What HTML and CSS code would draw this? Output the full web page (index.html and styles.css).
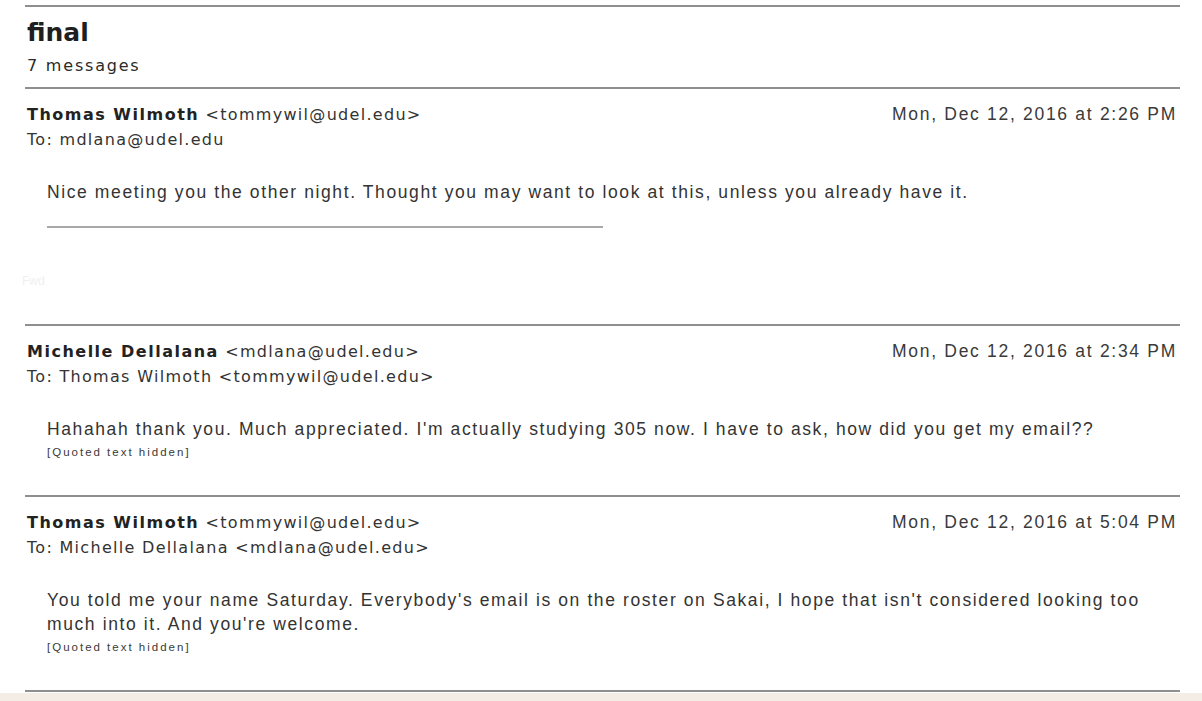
FILE: index.html
```html
<!DOCTYPE html>
<html lang="en">
<head>
<meta charset="utf-8">
<title>final - 7 messages</title>
<link rel="stylesheet" href="styles.css">
</head>
<body>
<div class="page">
  <div class="thread">
    <header class="thread-head">
      <h1 class="subject">final</h1>
      <div class="count">7 messages</div>
    </header>

    <section class="msg">
      <div class="msg-head">
        <div class="who">
          <div class="from"><b class="name">Thomas Wilmoth</b> &lt;tommywil@udel.edu&gt;</div>
          <div class="to">To: mdlana@udel.edu</div>
        </div>
        <div class="date">Mon, Dec 12, 2016 at 2:26 PM</div>
      </div>
      <div class="msg-body">
        <p class="text">Nice meeting you the other night. Thought you may want to look at this, unless you already have it.</p>
        <div class="sig-rule"></div>
        <div class="faint">Fwd</div>
      </div>
    </section>

    <section class="msg">
      <div class="msg-head">
        <div class="who">
          <div class="from"><b class="name">Michelle Dellalana</b> &lt;mdlana@udel.edu&gt;</div>
          <div class="to">To: Thomas Wilmoth &lt;tommywil@udel.edu&gt;</div>
        </div>
        <div class="date">Mon, Dec 12, 2016 at 2:34 PM</div>
      </div>
      <div class="msg-body">
        <p class="text">Hahahah thank you. Much appreciated. I'm actually studying 305 now. I have to ask, how did you get my email??</p>
        <div class="quoted">[Quoted text hidden]</div>
      </div>
    </section>

    <section class="msg">
      <div class="msg-head">
        <div class="who">
          <div class="from"><b class="name">Thomas Wilmoth</b> &lt;tommywil@udel.edu&gt;</div>
          <div class="to">To: Michelle Dellalana &lt;mdlana@udel.edu&gt;</div>
        </div>
        <div class="date">Mon, Dec 12, 2016 at 5:04 PM</div>
      </div>
      <div class="msg-body">
        <p class="text">You told me your name Saturday. Everybody's email is on the roster on Sakai, I hope that isn't considered looking too much into it. And you're welcome.</p>
        <div class="quoted">[Quoted text hidden]</div>
      </div>
    </section>
  </div>
  <div class="footer-band"></div>
</div>
</body>
</html>
```

FILE: styles.css
```css
* { box-sizing: border-box; }

html, body {
  margin: 0;
  padding: 0;
  background: #ffffff;
}

body {
  font-family: "Liberation Sans", Arial, sans-serif;
  color: #333333;
}

.page {
  display: flex;
  flex-direction: column;
  min-height: 701px;
}

.thread {
  margin-left: 25px;
  width: 1155px;
}

.thread-head {
  margin-top: 5px;
  border-top: 2px solid #8f8f8f;
  border-bottom: 2px solid #8f8f8f;
  padding: 12px 0 11px 2px;
}

.subject {
  margin: 0;
  font-family: "DejaVu Sans", Verdana, sans-serif;
  font-size: 25px;
  line-height: 28px;
  font-weight: bold;
  color: #1f1f1f;
}

.count {
  margin-top: 9px;
  font-family: "DejaVu Sans", Verdana, sans-serif;
  font-size: 16px;
  line-height: 20px;
  letter-spacing: 1.8px;
  color: #2a2a2a;
}

.msg {
  border-bottom: 2px solid #8f8f8f;
  padding: 13px 3px 35px 2px;
}

.msg-head {
  display: flex;
  justify-content: space-between;
  align-items: flex-start;
}

.from, .to {
  font-family: "DejaVu Sans", Verdana, sans-serif;
  font-size: 16px;
  line-height: 25px;
  letter-spacing: 1.3px;
  color: #333333;
}

.from .name {
  color: #222222;
  letter-spacing: 1.5px;
}

.date {
  font-size: 17.5px;
  line-height: 25px;
  letter-spacing: 1.7px;
  color: #3a3a3a;
}

.msg-body {
  padding-left: 20px;
  margin-top: 28px;
}

.text {
  margin: 0;
  font-size: 17.5px;
  line-height: 24px;
  letter-spacing: 1.6px;
  color: #333333;
  max-width: 1120px;
}

.sig-rule {
  margin-top: 22px;
  width: 556px;
  height: 2px;
  background: #a8a8a8;
}

.faint {
  margin: 45px 0 0 -25px;
  font-size: 12px;
  line-height: 16px;
  color: #f0f0f0;
}

.quoted {
  margin-top: 3px;
  font-size: 11.5px;
  line-height: 16px;
  letter-spacing: 2px;
  color: #3a3a3a;
}

.footer-band {
  flex: 1;
  margin-top: 1px;
  background: #f3ede6;
}
```
